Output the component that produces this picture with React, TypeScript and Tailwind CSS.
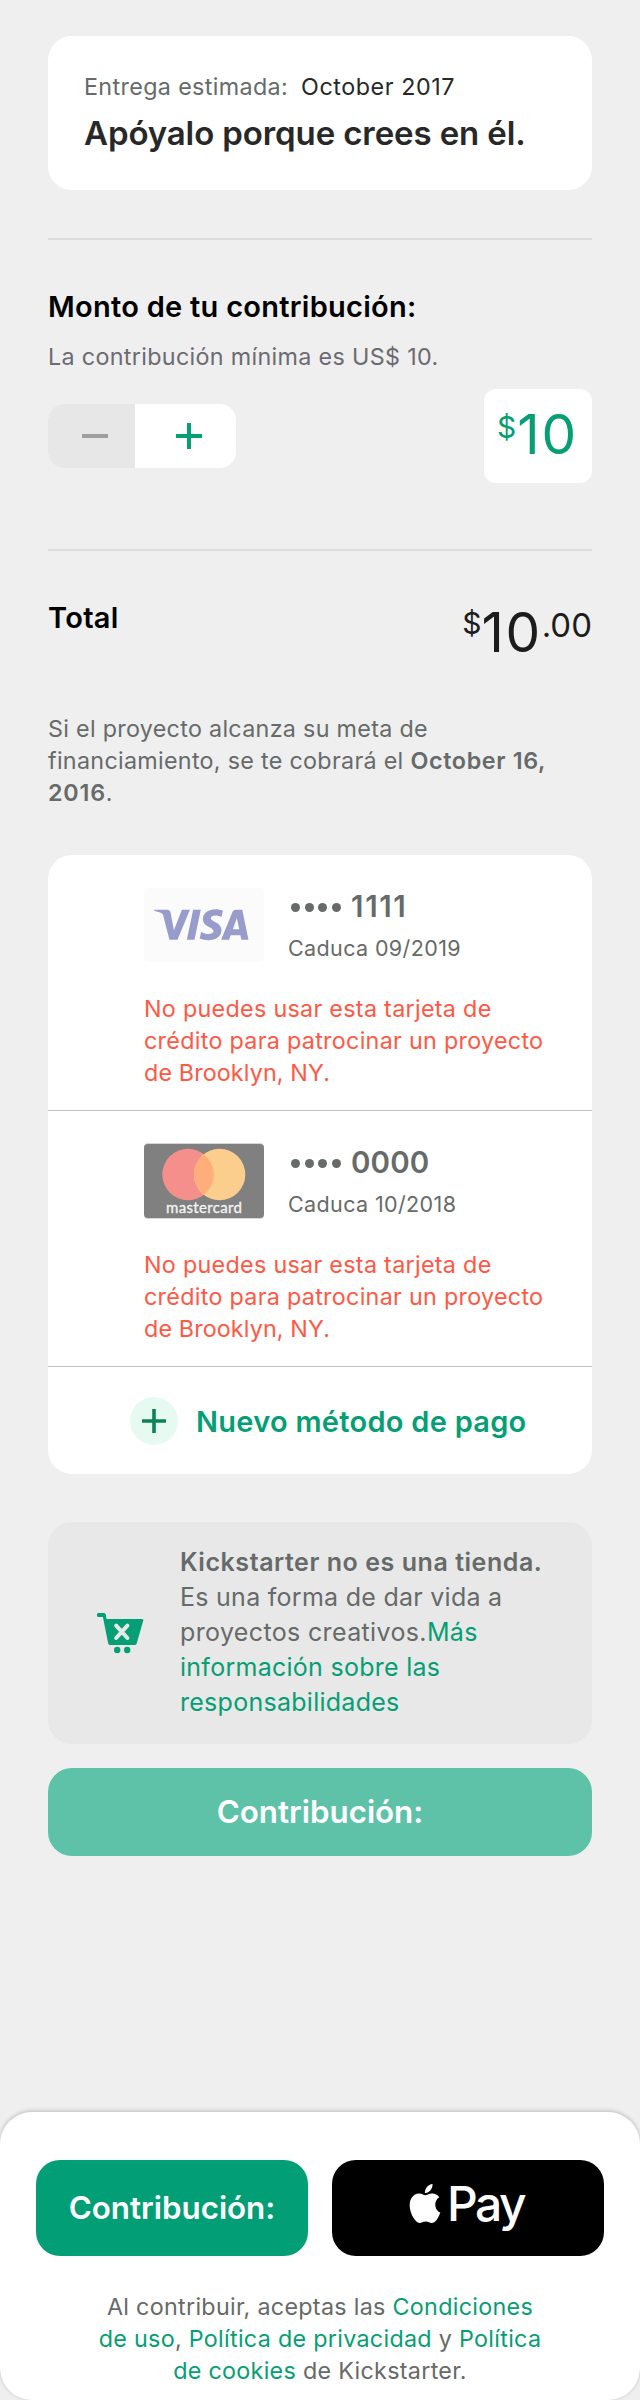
import type { ReactNode } from "react";

function Divider({ className }: { className: string }) {
  return <div className={`h-[2px] shrink-0 bg-[#dcdcdc] ${className}`} />;
}

function Line({ className = "", children }: { className?: string; children: ReactNode }) {
  return <span className={`block w-max whitespace-pre ${className}`}>{children}</span>;
}

function VisaLogo() {
  return (
    <svg width="120" height="74" viewBox="0 0 120 74" className="shrink-0">
      <rect width="120" height="74" rx="4" fill="#fbfbfb" />
      <g transform="translate(10 21.3) scale(0.0945 0.0955)" fill="#979ccb">
        <path d="M651.19 0.5c-70.93 0-134.32 36.77-134.32 104.69 0 77.9 112.42 83.28 112.42 122.42 0 16.48-18.88 31.23-51.14 31.23-45.77 0-79.98-20.61-79.98-20.61l-14.64 68.55s39.41 17.41 91.73 17.41c77.55 0 138.58-38.57 138.58-107.66 0-82.32-112.89-87.54-112.89-123.86 0-12.91 15.5-27.05 47.66-27.05 36.29 0 65.89 14.99 65.89 14.99l14.33-66.2S696.61 0.5 651.19 0.5zM2.22 5.5L0.5 15.49s29.84 5.46 56.72 16.36c34.61 12.49 37.07 19.77 42.9 42.35l63.51 244.83h85.14L379.93 5.5h-84.94L210.7 218.7l-34.4-180.72c-3.15-20.68-19.13-32.48-38.68-32.48H2.22zm411.87 0l-66.63 313.53h81L494.85 5.5h-80.76zm451.76 0c-19.53 0-29.88 10.46-37.47 28.73L709.7 319.03h84.94l16.43-47.47h103.48l9.99 47.47h74.95L934.12 5.5h-68.27zm11.05 84.71l25.18 117.65h-67.45l42.27-117.65z" />
      </g>
    </svg>
  );
}

function MastercardLogo() {
  return (
    <svg width="120" height="76" viewBox="0 0 120 76" className="-my-px shrink-0">
      <rect width="120" height="76" rx="4" fill="#d6d6d6" />
      <rect y="1" width="120" height="74" rx="4" fill="#808080" />
      <circle cx="44" cy="31.5" r="25.7" fill="#f58f8b" />
      <circle cx="75.6" cy="31.5" r="25.7" fill="#fbce8e" />
      <path d="M59.8 11.2a25.7 25.7 0 0 1 0 40.6a25.7 25.7 0 0 1 0-40.6z" fill="#ffad7b" />
      <text
        x="60"
        y="70.3"
        textAnchor="middle"
        fill="#f4f4f4"
        stroke="#f4f4f4"
        strokeWidth="0.3"
        fontFamily="Lato, sans-serif"
        fontSize="15"
        textLength="76"
      >
        mastercard
      </text>
    </svg>
  );
}

function PaymentMethod({ logo, digits, digitsClass, expires }: { logo: ReactNode; digits: string; digitsClass: string; expires: string }) {
  return (
    <div className="h-[256px] border-b border-[#c4c4c4] pl-24 pt-[33px]">
      <div className="flex h-[74px] gap-[25px]">
        {logo}
        <div className="text-[#666a69]">
          <div className="flex h-9 items-center text-[29.5px] font-semibold leading-9">
            <div className="mr-[10px] mt-[3px] flex gap-[4.7px] pl-[2px]">
              <i className="size-[9px] rounded-full bg-[#666a69]" />
              <i className="size-[9px] rounded-full bg-[#666a69]" />
              <i className="size-[9px] rounded-full bg-[#666a69]" />
              <i className="size-[9px] rounded-full bg-[#666a69]" />
            </div>
            <span className={digitsClass}>{digits}</span>
          </div>
          <Line className="-ml-px mt-[10px] text-[21.5px] leading-7 tracking-[0.38px]">{expires}</Line>
        </div>
      </div>
      <p className="mt-[31px] text-[23.3px] leading-8 tracking-[0.3px] text-[#ff5844]">
        <Line>No puedes usar esta tarjeta de</Line>
        <Line>crédito para patrocinar un proyecto</Line>
        <Line className="tracking-[0.13px]">de Brooklyn, NY.</Line>
      </p>
    </div>
  );
}

function CartIcon() {
  return (
    <svg width="48" height="42" viewBox="0 0 48 42" className="shrink-0">
      <path d="M1.7 0H7Q8.6 0 8.8 1.6L9.5 6H45Q46.6 6 46.2 7.7L39.7 30.4Q39.2 32 37.4 32H13.4Q11.6 32 11.2 30.4L5.9 4H1.7A2 2 0 0 1 1.7 0Z" fill="#069e74" />
      <path d="M19.2 12.6l11.2 12.4m0-12.4l-11.2 12.4" stroke="#e8e8e8" strokeWidth="4" strokeLinecap="round" />
      <circle cx="20.2" cy="37" r="3.2" fill="#069e74" />
      <circle cx="30.2" cy="37" r="3.2" fill="#069e74" />
    </svg>
  );
}

function AppleIcon() {
  return (
    <svg width="32" height="39" viewBox="1.8 0 20.4 24" preserveAspectRatio="none" fill="#fff" className="shrink-0">
      <path d="M12.152 6.896c-.948 0-2.415-1.078-3.96-1.04-2.04.027-3.91 1.183-4.961 3.014-2.117 3.675-.546 9.103 1.519 12.09 1.013 1.454 2.208 3.09 3.792 3.039 1.52-.065 2.09-.987 3.935-.987 1.831 0 2.35.987 3.96.948 1.637-.026 2.676-1.48 3.676-2.948 1.156-1.688 1.636-3.325 1.662-3.415-.039-.013-3.182-1.221-3.22-4.857-.026-3.04 2.48-4.494 2.597-4.559-1.429-2.09-3.623-2.324-4.39-2.376-2-.156-3.675 1.09-4.61 1.09zM15.53 3.83c.843-1.012 1.4-2.427 1.245-3.83-1.207.052-2.662.805-3.532 1.818-.78.896-1.454 2.338-1.273 3.714 1.338.104 2.715-.688 3.559-1.701" />
    </svg>
  );
}

export default function App() {
  return (
    <main className="flex h-[2400px] w-[640px] flex-col overflow-hidden bg-[#efefef] pt-9 font-['Inter',sans-serif] text-[#666a69]">
      <section className="mx-12 h-[154px] shrink-0 rounded-3xl bg-white pl-[36px] pt-[35px]">
        <div className="flex gap-[13px] text-[23.3px] leading-8">
          <Line className="tracking-[0.36px]">Entrega estimada:</Line>
          <Line className="tracking-[0.55px] text-[#282828]">October 2017</Line>
        </div>
        <h1 className="mt-[10px] text-[33px] font-semibold leading-10 tracking-[-0.11px] text-[#282828]">
          <Line>Apóyalo porque crees en él.</Line>
        </h1>
      </section>

      <Divider className="mx-12 mt-12" />

      <section className="mx-12 mt-[49px] shrink-0">
        <h2 className="text-[29px] font-semibold leading-9 tracking-[0.27px] text-black">
          <Line>Monto de tu contribución:</Line>
        </h2>
        <p className="mt-4 text-[23.3px] leading-8 tracking-[0.33px] text-[#6b6b70]">
          <Line>La contribución mínima es US$ 10.</Line>
        </p>
        <div className="mt-4 flex items-center justify-between">
          <div className="flex h-16 w-[188px] overflow-hidden rounded-2xl bg-white">
            <button className="flex w-[87px] items-center bg-[#e7e7e7] pl-[34px]" aria-label="−">
              <span className="h-1 w-[26px] bg-[#9d9f9f]" />
            </button>
            <button className="flex flex-1 items-center pl-[41px]" aria-label="+">
              <svg width="26" height="26" viewBox="0 0 26 26" stroke="#069e74" strokeWidth="4">
                <path d="M13 0V26M0 13H26" />
              </svg>
            </button>
          </div>
          <div className="flex h-[94px] w-[108px] items-start rounded-xl bg-white pl-[13px] text-[#069e74]">
            <span className="mt-[20px] text-[30px] leading-9">$</span>
            <span className="ml-px mt-[12px] text-[55px] leading-[66px] tracking-[2px]">10</span>
          </div>
        </div>
      </section>

      <Divider className="mx-12 mt-[66px]" />

      <section className="mx-12 mt-[49px] flex h-[72px] shrink-0 justify-between">
        <h2 className="text-[29px] font-semibold leading-9 tracking-[0.3px] text-black">Total</h2>
        <div className="flex text-[#1c1c1c]">
          <span className="mt-[5px] text-[30px] leading-9">$</span>
          <span className="-mt-px text-[55px] leading-[66px] tracking-[1.5px]">10</span>
          <span className="mt-[5px] text-[33px] leading-10">.00</span>
        </div>
      </section>

      <p className="mx-12 mt-[41px] shrink-0 text-[23.3px] leading-8 tracking-[0.3px]">
        <Line>Si el proyecto alcanza su meta de</Line>
        <Line>
          financiamiento, se te cobrará el <b className="font-semibold tracking-[0.65px]">October 16,</b>
        </Line>
        <Line>
          <b className="font-semibold tracking-[0.8px]">2016</b>.
        </Line>
      </p>

      <section className="mx-12 mt-[46px] h-[619px] shrink-0 overflow-hidden rounded-3xl bg-white">
        <PaymentMethod logo={<VisaLogo />} digits="1111" digitsClass="tracking-[1.6px]" expires="Caduca 09/2019" />
        <PaymentMethod logo={<MastercardLogo />} digits="0000" digitsClass="tracking-[0.1px]" expires="Caduca 10/2018" />
        <button className="flex h-[107px] items-center pl-[82px] text-[29px] font-semibold leading-9 text-[#069e74]">
          <span className="flex size-12 items-center justify-center rounded-full bg-[#e6faf1]">
            <svg width="24" height="24" viewBox="0 0 24 24" stroke="#0b8259" strokeWidth="3.6">
              <path d="M12 0V24M0 12H24" />
            </svg>
          </span>
          <Line className="ml-[18px] pt-[3px] tracking-[0.27px]">Nuevo método de pago</Line>
        </button>
      </section>

      <section className="mx-12 mt-12 flex h-[222px] shrink-0 rounded-3xl bg-[#e8e8e8] pl-[49px]">
        <div className="mt-[91px] w-[83px]">
          <CartIcon />
        </div>
        <p className="pt-[23px] text-[25px] leading-[35px] tracking-[0.27px]">
          <Line className="font-semibold tracking-[0.55px]">Kickstarter no es una tienda.</Line>
          <Line>Es una forma de dar vida a</Line>
          <Line className="tracking-[0.36px]">
            proyectos creativos.<span className="text-[#069e74]">Más</span>
          </Line>
          <Line className="text-[#069e74]">información sobre las</Line>
          <Line className="text-[#069e74]">responsabilidades</Line>
        </p>
      </section>

      <button className="mx-12 mt-6 flex h-[88px] shrink-0 items-center justify-center rounded-3xl bg-[#5dc2a8] text-[31.3px] font-semibold text-white">
        <Line>Contribución:</Line>
      </button>

      <footer className="mt-[256px] h-72 shrink-0 rounded-[32px] bg-white pt-12 shadow-[0_-1px_4px_rgba(0,0,0,0.22)]">
        <div className="flex gap-6 px-9">
          <button className="flex h-24 w-[272px] items-center justify-center rounded-3xl bg-[#029e76] text-[31.3px] font-semibold text-white">
            <Line>Contribución:</Line>
          </button>
          <button className="flex h-24 w-[272px] rounded-3xl bg-black pl-[77px] pt-6 text-white">
            <AppleIcon />
            <Line className="-mt-[9px] ml-[6px] text-[48px] font-medium leading-[58px] tracking-[-2.6px]">Pay</Line>
          </button>
        </div>
        <p className="mt-[35px] flex flex-col items-center text-[23.3px] leading-8 tracking-[0.3px]">
          <Line>
            Al contribuir, aceptas las <span className="text-[#069e74]">Condiciones</span>
          </Line>
          <Line>
            <span className="text-[#069e74]">de uso</span>, <span className="text-[#069e74]">Política de privacidad</span> y{" "}
            <span className="text-[#069e74]">Política</span>
          </Line>
          <Line>
            <span className="text-[#069e74]">de cookies</span> de Kickstarter.
          </Line>
        </p>
      </footer>
    </main>
  );
}
